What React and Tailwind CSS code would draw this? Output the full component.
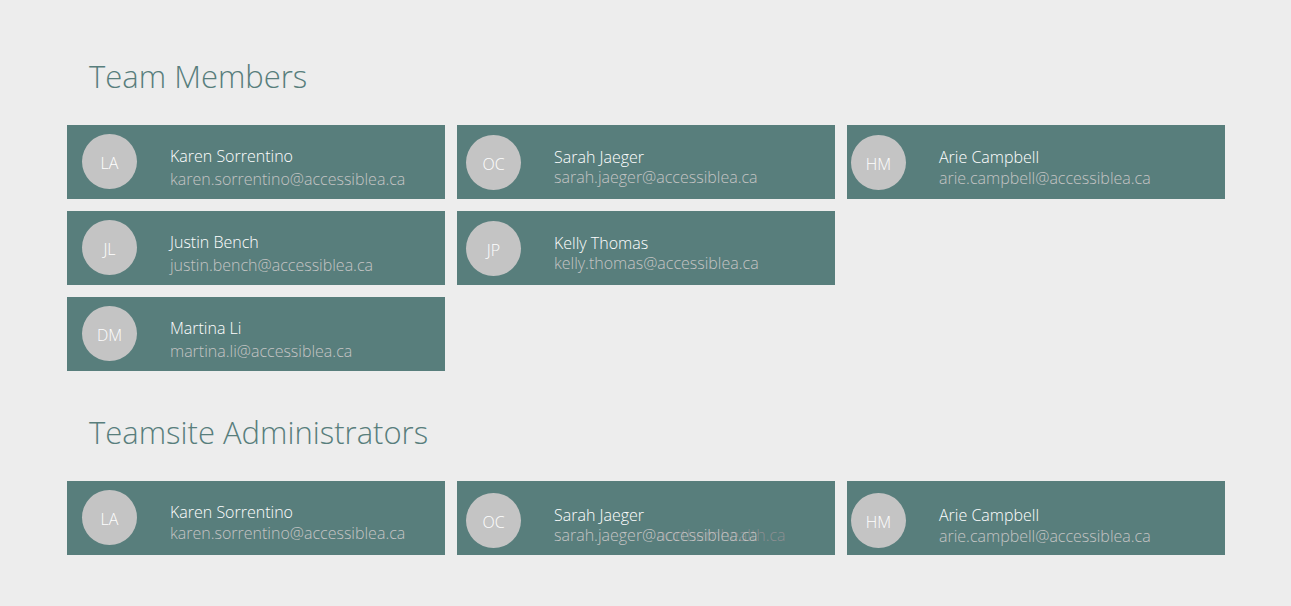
const members = [
  { initials: "LA", name: "Karen Sorrentino", email: "karen.sorrentino@accessiblea.ca" },
  { initials: "OC", name: "Sarah Jaeger", email: "sarah.jaeger@accessiblea.ca" },
  { initials: "HM", name: "Arie Campbell", email: "arie.campbell@accessiblea.ca" },
  { initials: "JL", name: "Justin Bench", email: "justin.bench@accessiblea.ca" },
  { initials: "JP", name: "Kelly Thomas", email: "kelly.thomas@accessiblea.ca" },
  null,
  { initials: "DM", name: "Martina Li", email: "martina.li@accessiblea.ca" },
];

const administrators = [
  members[0],
  { ...members[1], previousDomain: "northernhealth.ca" },
  members[2],
];

const memberColumns = [
  { card: "pl-[15px] pt-[9px]", text: "gap-[3px]" },
  { card: "pl-[9px] pt-[10px]", text: "gap-0" },
  { card: "pl-1 pt-[10px]", text: "gap-px" },
];

const adminColumns = [
  { card: "pl-[15px] pt-[9px]", text: "gap-px" },
  { card: "pl-[9px] pt-3", text: "gap-0" },
  { card: "pl-1 pt-3", text: "gap-px" },
];

function PersonCard({ person, column }) {
  return (
    <li className={`flex h-[74px] items-start gap-[33px] bg-[#587e7c] ${column.card}`}>
      <span className="flex size-[55px] shrink-0 items-center justify-center rounded-full bg-[#c4c4c4] pt-0.5 text-base leading-5 text-white">
        {person.initials}
      </span>
      <div className={`flex flex-col pt-3 text-base leading-5 ${column.text}`}>
        <p className="text-white">{person.name}</p>
        <a href={`mailto:${person.email}`} className="relative whitespace-nowrap text-[#c4c4c4]">
          {person.previousDomain && (
            <span className="absolute -right-7 top-0 text-[#8b8f92]">{person.previousDomain}</span>
          )}
          <span className="relative">{person.email}</span>
        </a>
      </div>
    </li>
  );
}

function PeopleSection({ title, people, columns }) {
  return (
    <section>
      <h2 className="pl-[22px] text-[31px] leading-[46px] text-[#587e7c]">{title}</h2>
      <ul className="mt-[26px] grid grid-cols-3 gap-3">
        {people.map((person, i) =>
          person ? (
            <PersonCard key={person.email} person={person} column={columns[i % 3]} />
          ) : (
            <li key={i} aria-hidden="true" />
          )
        )}
      </ul>
    </section>
  );
}

export default function App() {
  return (
    <main className="flex min-h-screen flex-col gap-[38px] bg-[#ededed] pb-12 pl-[67px] pr-[66px] pt-[53px] font-['Open_Sans','Noto_Sans',sans-serif] font-light">
      <PeopleSection title="Team Members" people={members} columns={memberColumns} />
      <PeopleSection title="Teamsite Administrators" people={administrators} columns={adminColumns} />
    </main>
  );
}
